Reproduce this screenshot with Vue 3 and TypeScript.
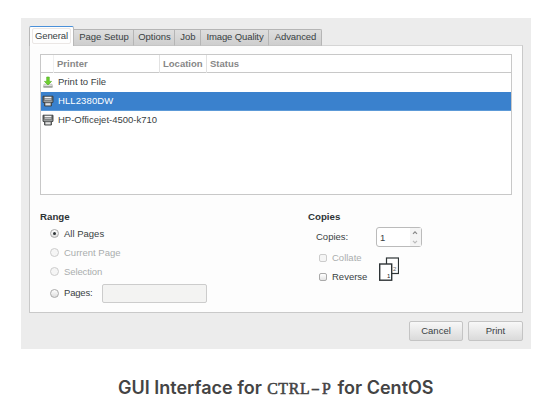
<script setup lang="ts">
import { ref } from 'vue'

interface Tab { label: string; width: number; spacing: number }
interface Printer { name: string; icon: 'file' | 'printer'; spacing: number }
interface RangeOption { id: string; label: string; disabled: boolean; spacing: number }

const tabs: Tab[] = [
  { label: 'General', width: 45, spacing: -0.1 },
  { label: 'Page Setup', width: 60, spacing: 0 },
  { label: 'Options', width: 41, spacing: 0 },
  { label: 'Job', width: 26, spacing: 0 },
  { label: 'Image Quality', width: 68, spacing: -0.12 },
  { label: 'Advanced', width: 53, spacing: -0.1 },
]
const printers: Printer[] = [
  { name: 'Print to File', icon: 'file', spacing: 0 },
  { name: 'HLL2380DW', icon: 'printer', spacing: 0.1 },
  { name: 'HP-Officejet-4500-k710', icon: 'printer', spacing: 0 },
]
const ranges: RangeOption[] = [
  { id: 'all', label: 'All Pages', disabled: false, spacing: 0 },
  { id: 'current', label: 'Current Page', disabled: true, spacing: 0 },
  { id: 'selection', label: 'Selection', disabled: true, spacing: -0.1 },
  { id: 'pages', label: 'Pages:', disabled: false, spacing: -0.2 },
]
const activeTab = ref('General')
const selected = ref('HLL2380DW')
const range = ref('all')
const copies = ref(1)
const shortcut = 'CTRL-P'.split('')
</script>

<template>
  <figure class="figure">
    <div class="dialog">
      <div class="tabs">
        <button
          v-for="t in tabs" :key="t.label" class="tab" :class="{ active: t.label === activeTab }"
          :style="{ width: t.width + 'px', letterSpacing: t.spacing + 'px' }" @click="activeTab = t.label"
        ><span>{{ t.label }}</span></button>
      </div>
      <section class="panel">
        <div class="list">
          <div class="head">
            <span></span><span>Printer</span><span>Location</span><span>Status</span>
          </div>
          <div
            v-for="p in printers" :key="p.name" class="row" :class="{ selected: p.name === selected }"
            @click="selected = p.name"
          >
            <svg v-if="p.icon === 'file'" class="icon" viewBox="0 0 12 12">
              <path d="M2 8.2h8l.7 3H1.3z" fill="#dcdedc" stroke="#a9ada9" stroke-width=".6" />
              <path d="M1.8 10.9h8.4" stroke="#777d77" stroke-width=".9" />
              <path d="M4.7 1h2.6v4.4h2.3L6 9 2.4 5.4h2.3z" fill="#6fd02f" stroke="#4cab1e" stroke-width=".6" />
            </svg>
            <svg v-else class="icon" viewBox="0 0 12 12">
              <path d="M1 1.2h10v6.2H9.4V11H2.6V7.4H1z" fill="#66696a" stroke="#3b3e3f" stroke-width=".9" />
              <path d="M2.6 1.8h6.8v1.5H2.6z" fill="#f4f4f4" />
              <path d="M2.6 3.9h6.8v.9H2.6z" fill="#cfd0d0" />
              <path d="M1.6 5.6h8.8v1.2H1.6z" fill="#a8abab" />
              <path d="M3.4 8.2h5.2v2.2H3.4z" fill="#e2e2e2" />
            </svg>
            <span :style="{ letterSpacing: p.spacing + 'px' }">{{ p.name }}</span>
          </div>
        </div>
        <div class="settings">
          <div class="range">
            <h2>Range</h2>
            <div
              v-for="r in ranges" :key="r.id" class="option" :class="{ disabled: r.disabled, last: r.id === 'pages' }"
              @click="!r.disabled && (range = r.id)"
            >
              <i class="radio" :class="{ on: range === r.id }"></i>
              <span :style="{ letterSpacing: r.spacing + 'px' }">{{ r.label }}</span>
              <div v-if="r.id === 'pages'" class="pages"></div>
            </div>
          </div>
          <div class="copies">
            <h2>Copies</h2>
            <div class="count">
              <span>Copies:</span>
              <div class="spin">
                <b>{{ copies }}</b>
                <div class="arrows">
                  <svg viewBox="0 0 10 9" @click="copies++"><path d="M3 5.8 5 3.8l2 2" fill="none" stroke="#888" stroke-width="1.2" /></svg>
                  <svg viewBox="0 0 10 9" @click="copies > 1 && copies--"><path d="M3 3.8l2 2 2-2" fill="none" stroke="#bbb" stroke-width="1.2" /></svg>
                </div>
              </div>
            </div>
            <div class="order">
              <div class="checks">
                <label class="disabled"><i class="check"></i><span>Collate</span></label>
                <label><i class="check"></i><span>Reverse</span></label>
              </div>
              <svg class="sheets" viewBox="0 0 20 24">
                <rect x="7.5" y="1" width="12" height="15.5" fill="#fff" stroke="#2e3436" stroke-width="1.2" />
                <text x="14" y="14">2</text>
                <rect x=".7" y="7" width="12" height="16.2" fill="#fff" stroke="#2e3436" stroke-width="1.4" />
                <text x="8" y="20.5" class="front">1</text>
              </svg>
            </div>
          </div>
        </div>
      </section>
      <div class="actions">
        <button class="btn">Cancel</button>
        <button class="btn print">Print</button>
      </div>
    </div>
    <figcaption>
      <span class="before">GUI Interface for</span>
      <code><span v-for="(c, i) in shortcut" :key="i" :class="{ dash: c === '-' }">{{ c }}</span></code>
      <span class="after">for CentOS</span>
    </figcaption>
  </figure>
</template>

<style>
body { background: #fff; }
</style>

<style scoped>
* { box-sizing: border-box; }
.figure { margin: 0; padding: 18px 7px 0 21px; width: 538px; height: 415px; overflow: hidden; font-family: "Liberation Sans", Arial, sans-serif; font-size: 9.5px; line-height: 12px; color: #394143; white-space: nowrap; }
.dialog { width: 510px; height: 331px; background: #ececec; padding: 8px 8px 0; }
.tabs { position: relative; z-index: 1; display: flex; align-items: flex-end; height: 20px; }
.tab { height: 17px; margin: 0; padding: 0; border: 1px solid #b5b5b5; border-left-width: 0; border-bottom-color: #c5c5c5; background: linear-gradient(#dedede, #cecece); font: inherit; color: inherit; }
.tab:last-child { border-top-right-radius: 2px; }
.tab.active { height: 20px; border: 1px solid #b8b8b8; border-top: 1px solid #4a90d9; border-bottom: 0; background: #fefefe; border-radius: 2px 2px 0 0; padding: 1px 3px 2px; }
.tab span { display: block; height: 15px; line-height: 14px; padding-left: 1px; }
.tab.active span { height: 16px; line-height: 14px; padding: 0; border: 1px solid #ebe7e5; border-radius: 2px; margin: 0 -1px; }
.panel { width: 494px; height: 268px; background: #fdfdfd; border: 1px solid #c9c9c9; border-top-color: #d5d5d5; margin-top: -1px; padding: 8px 10px 0; }
.list { height: 141px; width: 472px; background: #fff; border: 1px solid #c8c8c8; }
.head { display: grid; grid-template-columns: 13px 106px 47px 1fr; height: 18px; border-bottom: 1px solid #c8c8c8; font-weight: bold; color: #878787; line-height: 18px; }
.head span { padding-left: 3px; border-right: 1px solid #e2e2e2; }
.head span:first-child { border-color: #f0f0f0; }
.head span:last-child { border: 0; }
.row { height: 19px; display: flex; align-items: center; padding: 0 0 1px 1px; gap: 4px; }
.row.selected { background: #3a81cd; color: #fff; border-bottom: 1px solid #5c9ad8; padding-bottom: 0; }
.icon { width: 12px; height: 12px; }
.settings { display: flex; }
.range { width: 268px; padding-top: 15px; }
h2 { font-size: 9.7px; line-height: 14px; margin: 0; color: #2e3436; }
.option { display: flex; align-items: center; height: 19px; padding-left: 10px; }
.option.last { height: 24px; }
.disabled { color: #aaadae; }
.radio { flex: none; width: 9px; height: 9px; border: 1px solid #aaa; border-radius: 50%; background: linear-gradient(#fff, #ddd); margin-right: 5px; display: flex; }
.radio.on::after { content: ''; width: 3px; height: 3px; margin: 2px; background: #2e3436; border-radius: 50%; }
.disabled .radio, .disabled .check { border-color: #ccc; background: #f5f5f5; }
.pages { width: 105px; height: 19px; margin-left: auto; margin-right: 101px; border: 1px solid #ccc; border-radius: 2px; background: #f3f3f2; }
.copies { padding-top: 15px; }
.count { display: flex; align-items: center; height: 20px; margin: 3px 0 0 8px; }
.count > span { width: 60px; }
.spin { width: 46px; height: 20px; border: 1px solid #bbb; border-radius: 3px; background: #fff; display: flex; justify-content: space-between; }
.spin b { font-weight: normal; line-height: 19px; padding-left: 3px; }
.arrows { width: 11px; background: #f4f4f4; display: flex; flex-direction: column; }
.arrows svg { width: 10px; height: 9px; }
.order { display: flex; }
.checks { padding: 1px 0 0 11px; width: 71px; }
label { display: flex; align-items: center; height: 19px; }
.check { width: 8px; height: 8px; border: 1px solid #aaa; border-radius: 2px; background: linear-gradient(#fff, #e4e4e4); margin-right: 5px; }
.sheets { width: 20px; height: 24px; margin-top: 10px; }
.sheets text { font-size: 6px; fill: #666; }
.sheets .front { fill: #222; }
.actions { display: flex; justify-content: flex-end; gap: 5px; margin-top: 8px; }
.btn { width: 54px; height: 20px; padding: 0; border: 1px solid #c4c4c4; border-radius: 2px; background: linear-gradient(#f8f8f8, #dadada); font: inherit; color: inherit; }
.btn.print { width: 55px; }
figcaption { display: flex; align-items: baseline; padding: 26px 0 0 97px; font: 600 18px/26px Inter, sans-serif; color: #444; }
.before { width: 149px; }
code { display: flex; width: 70.5px; font: 400 15.8px/26px "Liberation Serif", serif; -webkit-text-stroke: .55px #444; }
code span { width: 10.8px; display: flex; justify-content: center; }
code .dash { transform: scaleX(1.75); -webkit-text-stroke-width: .2px; }
</style>
